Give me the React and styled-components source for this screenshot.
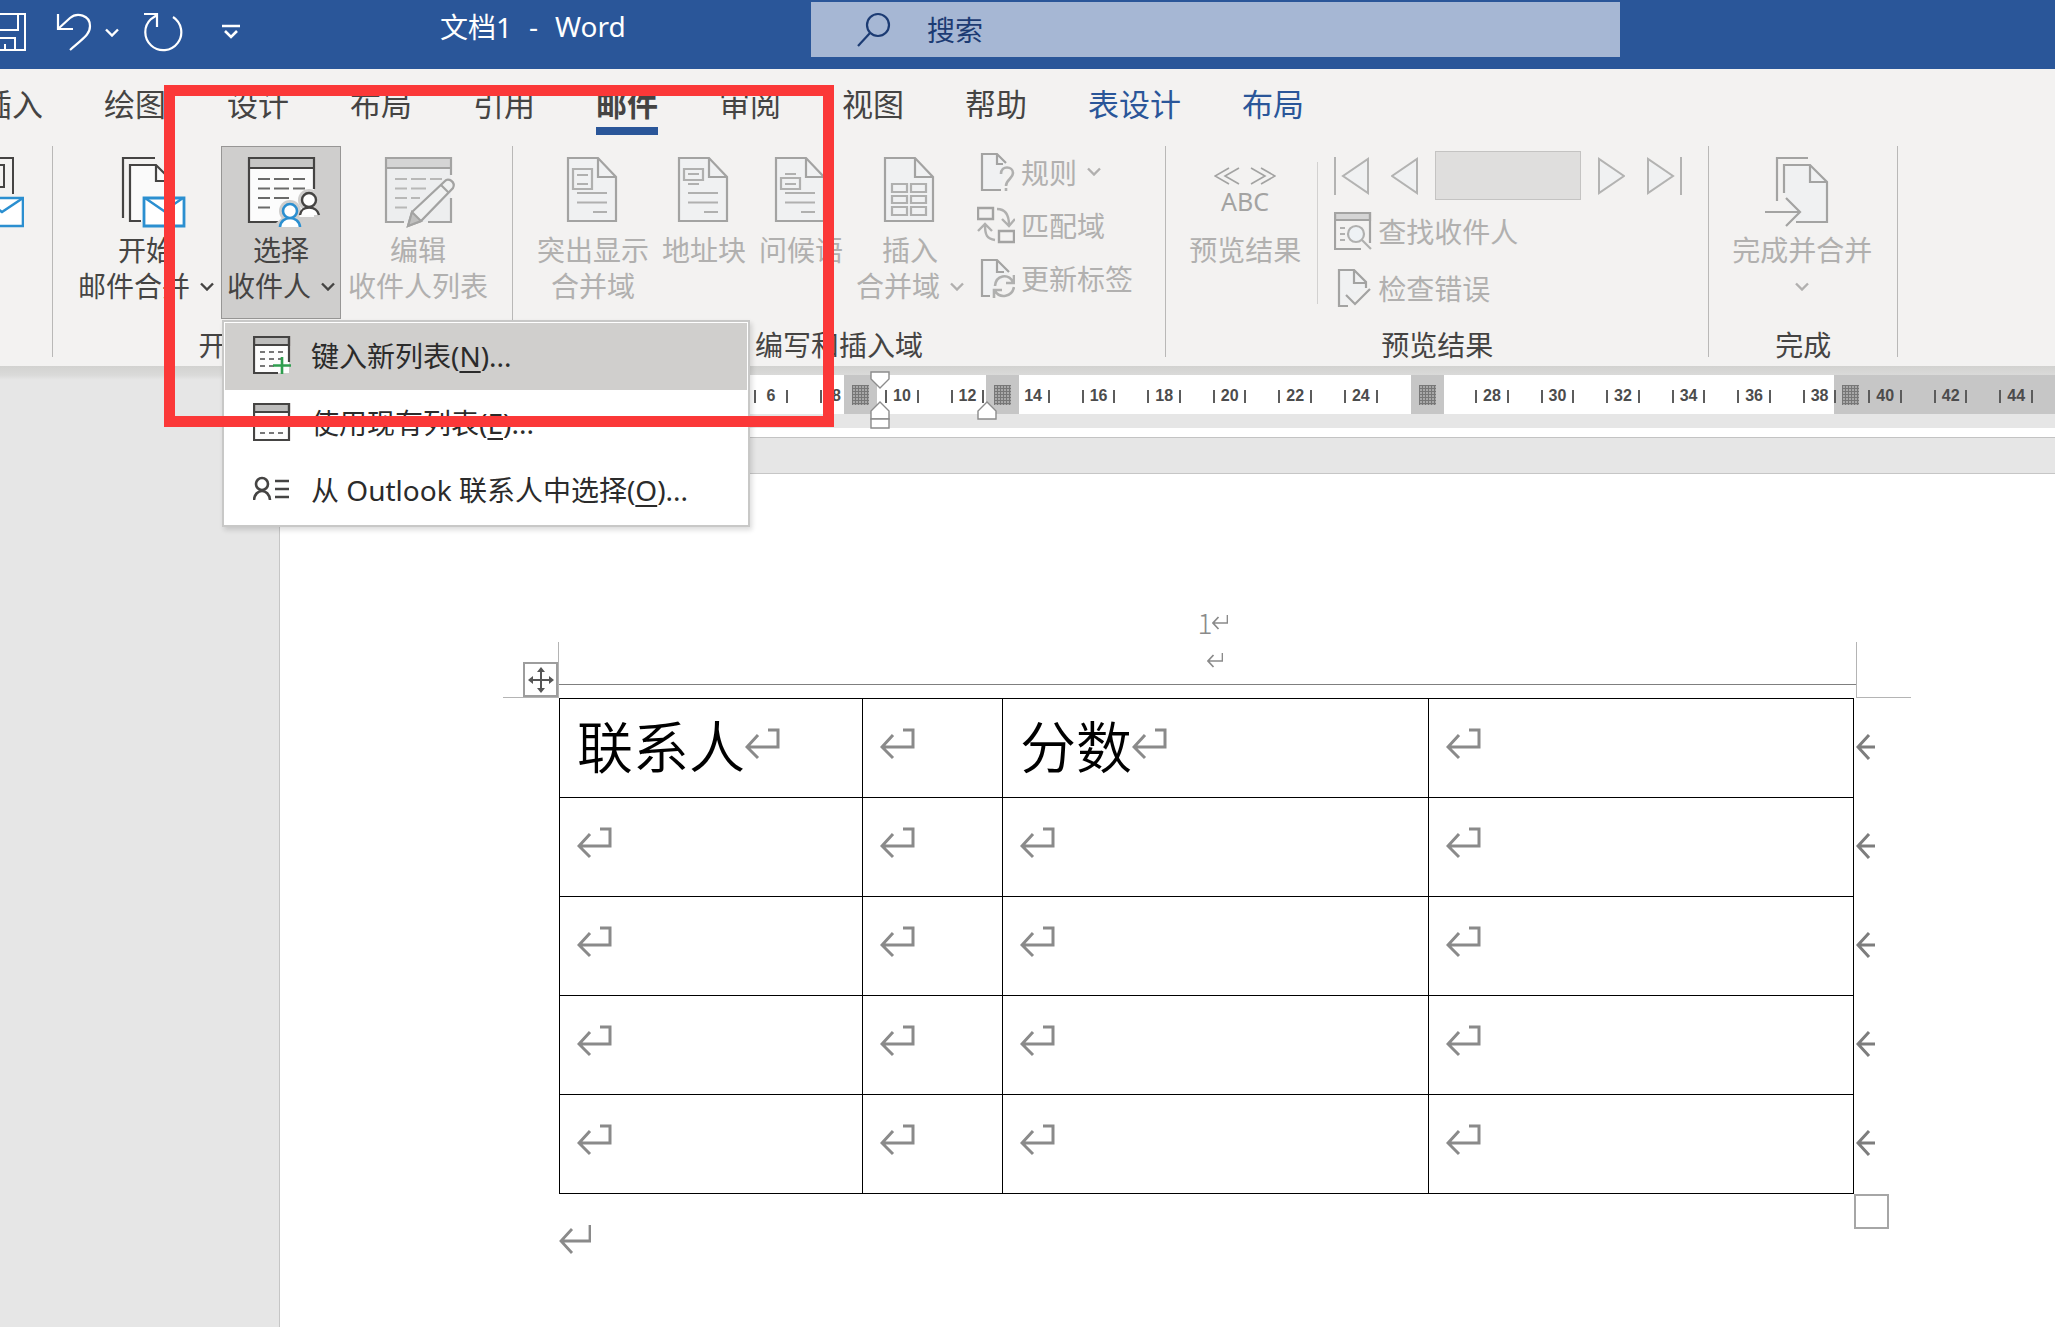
import { useState } from "react";
import styled, { createGlobalStyle } from "styled-components";

const DARK = "#454443";
const MUTED = "#a3a3a2";
const BLUE = "#2b8fd0";

const tabs = [
  { id: "insert", title: "插入" },
  { id: "draw", title: "绘图" },
  { id: "design", title: "设计" },
  { id: "layout", title: "布局" },
  { id: "references", title: "引用" },
  { id: "mailings", title: "邮件" },
  { id: "review", title: "审阅" },
  { id: "view", title: "视图" },
  { id: "help", title: "帮助" },
  { id: "table-design", title: "表设计", contextual: true },
  { id: "table-layout", title: "布局", contextual: true },
];

const rulerMarks = Array.from({ length: 22 }, (_, i) => (i + 1) * 2);
const RULER_UNITS = rulerMarks.length * 2;
// the first cell is centred on 2, so the track begins at unit 1
const rulerLeft = (unit) => `${((unit - 1) / RULER_UNITS) * 100}%`;

const rows = [
  ["联系人", "", "分数", ""],
  ["", "", "", ""],
  ["", "", "", ""],
  ["", "", "", ""],
  ["", "", "", ""],
];

/* ---------- icons ---------- */

const Chevron = () => (
  <svg width="14" height="9" viewBox="0 0 14 9" fill="none" stroke="currentColor" strokeWidth="2.4">
    <path d="M1 1.5L7 7.5L13 1.5" />
  </svg>
);

const SaveIcon = () => (
  <svg width="27" height="40" viewBox="0 0 27 40" fill="none" stroke="#fff" strokeWidth="2">
    <path d="M0 2H25V38H0M18 2V18H0M0 26H15V38M5 38V32" />
  </svg>
);

const UndoIcon = () => (
  <svg width="38" height="40" viewBox="0 0 38 40" fill="none" stroke="#fff" strokeWidth="2.2">
    <path d="M3 2V17H18M3 17L15 6C22 0 35 3 35 14C35 22 30 25 15 38" />
  </svg>
);

const RedoIcon = () => (
  <svg width="40" height="40" viewBox="0 0 40 40" fill="none" stroke="#fff" strokeWidth="2.2">
    <path d="M1 2H14V15M14 3L8 7A18 18 0 1 0 30 5" />
  </svg>
);

const CustomizeIcon = () => (
  <svg width="18" height="16" viewBox="0 0 18 16" fill="none" stroke="#fff" strokeWidth="2.6">
    <path d="M0 2H18M3 7L9 13L15 7" />
  </svg>
);

const SearchIcon = () => (
  <svg width="34" height="36" viewBox="0 0 34 36" fill="none" stroke="#1c3b73" strokeWidth="2.2">
    <circle cx="21" cy="13" r="11" />
    <path d="M13 21L1 34" />
  </svg>
);

const EnvelopeIcon = () => (
  <svg width="24" height="80" viewBox="0 0 24 80" fill="none" strokeWidth="2">
    <path d="M0 5H13V41M0 12H4V34H0" stroke={DARK} />
    <path d="M-20 45H23V73H-20Z" fill="#fff" stroke={BLUE} strokeWidth="2.6" />
    <path d="M23 45L2 59L-18 45" stroke={BLUE} strokeWidth="2.6" />
  </svg>
);

const StartMergeIcon = () => (
  <svg width="80" height="80" viewBox="0 0 80 80" fill="none" strokeWidth="2.2">
    <path d="M49 5H17V65" stroke={DARK} />
    <path d="M35 68H24V12H50L66 28V44" fill="#fafafa" stroke={DARK} />
    <path d="M50 12V28H66" stroke={DARK} />
    <path d="M38 45H78V73H38Z" fill="#fff" stroke={BLUE} strokeWidth="2.8" />
    <path d="M39 45L58 58L77 45" stroke={BLUE} strokeWidth="2.4" />
  </svg>
);

const SelectRecipientsIcon = () => (
  <svg width="80" height="80" viewBox="0 0 80 80" fill="none" strokeWidth="2.2">
    <path d="M8 5H73V69H8Z" fill="#fcfcfc" />
    <path d="M8 5H73V15H8Z" fill="#c6c6c5" />
    <path d="M73 36V5H8V69H37M8 15H73" stroke={DARK} />
    <path d="M17 26H29M33 26H48M52 26H64M17 35.500H29M33 35.500H48M52 35.500H64M17 45H29M33 45H48M17 54.500H29" stroke="#6a6a69" />
    <circle cx="68" cy="47" r="11" fill="#cfcecd" />
    <circle cx="49" cy="58" r="11" fill="#cfcecd" />
    <path d="M35 77V70L42 64H80V77Z" fill="#cfcecd" />
    <path d="M59 62C60 52 76 52 78 62" fill="#fff" stroke={DARK} strokeWidth="2.4" />
    <circle cx="68" cy="47" r="7" fill="#fff" stroke={DARK} strokeWidth="2.4" />
    <path d="M39 74C40 62 58 62 59 74" fill="#fff" stroke={BLUE} strokeWidth="2.6" />
    <circle cx="49" cy="58" r="7" fill="#fff" stroke={BLUE} strokeWidth="2.6" />
  </svg>
);

const EditListIcon = () => (
  <svg width="80" height="80" viewBox="0 0 80 80" fill="none" stroke={MUTED} strokeWidth="2.2">
    <path d="M8 5H73V69H8Z" fill="#edeeef" stroke="none" />
    <path d="M8 5H73V15H8Z" fill="#d5d5d5" stroke="none" />
    <path d="M73 22V5H8V69H26M8 15H73M50 69H73V45" />
    <path d="M17 26H29M33 26H48M52 26H64M17 35.500H29M33 35.500H48M17 45H29M33 45H42M17 54.500H29" stroke="#b8b8b7" />
    <path d="M30 73L34 59L67 28C70 24 78 29 75 35L43 68Z" fill="#f0f1f1" />
    <path d="M30 73L34 59L43 68Z" fill="#c0c0bf" />
    <path d="M63 32L71 40" />
  </svg>
);

const MergePageIcon = ({ kind }) => (
  <svg width="80" height="80" viewBox="0 0 80 80" fill="none" stroke={MUTED} strokeWidth="2.2">
    <path d="M15 5H45L63 24V68H15Z" fill="#f0f1f2" />
    <path d="M45 5V24H63" />
    {kind === "highlight" && <path d="M20 16H39V36H20ZM24 22H35M24 31H35" stroke="#b0b0af" />}
    {kind === "address" && <path d="M20 16H39V27H20ZM24 21H35M24 31H35" stroke="#b0b0af" />}
    {kind === "greeting" && <path d="M24 21H35M20 25H39V36H20ZM24 31H35" stroke="#b0b0af" />}
    {kind === "field" ? (
      <path d="M22 31H37V39H22ZM41 31H56V39H41ZM22 43H37V50H22ZM41 43H56V50H41ZM22 54H37V62H22ZM41 54H56V62H41Z" stroke="#b0b0af" />
    ) : (
      <path d="M24 40H54M24 49.500H54M40 59H54" stroke="#b0b0af" />
    )}
  </svg>
);

const FinishIcon = () => (
  <svg width="80" height="80" viewBox="0 0 80 80" fill="none" stroke={MUTED} strokeWidth="2.2">
    <path d="M15 48V5H46" />
    <path d="M22 40V12H48L65 29V69H34" fill="#f0f1f2" />
    <path d="M48 12V29H65" />
    <path d="M3 59H38M24 45L38 59L24 73" />
  </svg>
);

const RulesIcon = () => (
  <svg width="38" height="40" viewBox="0 0 38 40" fill="none" stroke={MUTED} strokeWidth="2.2">
    <path d="M24 38H5V2H20L29 11" fill="#f0f1f2" />
    <path d="M20 2V12H26" />
    <path d="M24 22C24 13 36 14 36 21C36 27 29 27 29 34M29 36V39" stroke="#b0b0af" strokeWidth="2.6" />
  </svg>
);

const MatchIcon = () => (
  <svg width="38" height="40" viewBox="0 0 38 40" fill="none" stroke={MUTED} strokeWidth="2.4">
    <path d="M1 3H16V14H1ZM22 26H37V37H22Z" />
    <path d="M20 4C28 4 32 10 32 20M25 14L32 21L38 14M18 35C10 34 8 30 8 20M1 26L8 19L15 26" stroke="#b0b0af" />
  </svg>
);

const UpdateIcon = () => (
  <svg width="38" height="40" viewBox="0 0 38 40" fill="none" stroke={MUTED} strokeWidth="2.2">
    <path d="M13 38H5V2H20L32 14" fill="#f0f1f2" />
    <path d="M20 2V14H27" />
    <path d="M18 28C19 17 31 15 36 24M37 17V25H29M37 29C35 39 23 41 18 33M17 40V32H25" stroke="#b0b0af" strokeWidth="2.6" />
  </svg>
);

const FindIcon = () => (
  <svg width="38" height="38" viewBox="0 0 38 38" fill="none" stroke={MUTED} strokeWidth="2.2">
    <path d="M1 1H36V8H1Z" fill="#d5d5d5" />
    <path d="M27 37H1V1H36V31" />
    <path d="M6 16H11M6 22H11M6 28H11" stroke="#b0b0af" />
    <circle cx="22" cy="22" r="8" fill="#eef2f5" stroke="#b0b0af" />
    <path d="M28 28L37 37" stroke="#b0b0af" />
  </svg>
);

const CheckErrorsIcon = () => (
  <svg width="38" height="38" viewBox="0 0 38 38" fill="none" stroke={MUTED} strokeWidth="2.2">
    <path d="M14 37H5V1H20L32 13V19" fill="#f0f1f2" />
    <path d="M20 1V14H32" />
    <path d="M12 26L21 35L36 20" />
  </svg>
);

const NavIcon = ({ flip, end }) => (
  <svg width={end ? 36 : 28} height="38" viewBox={end ? "0 0 36 38" : "8 0 28 38"} fill="none" stroke="#b3b3b2" strokeWidth="2">
    <g transform={flip ? (end ? "translate(36 0) scale(-1 1)" : "translate(44 0) scale(-1 1)") : undefined}>
      {end && <path d="M1 0V38" />}
      <path d="M34 2V36L9 19Z" fill="#f0f1f2" />
    </g>
  </svg>
);

const AngleQuotes = () => (
  <svg width="62" height="18" viewBox="0 0 62 18" fill="none" stroke={MUTED} strokeWidth="1.6">
    <path d="M15 1L1 9L15 17M25 1L11 9L25 17M37 1L51 9L37 17M47 1L61 9L47 17" />
  </svg>
);

const ListIcon = ({ add }) => (
  <svg width="38" height="38" viewBox="0 0 38 38" fill="none" stroke={DARK} strokeWidth="2.2">
    <path d="M1 1H36V37H1Z" fill="#fdfdfd" stroke="none" />
    <path d="M1 1H36V9H1Z" fill="#bdbdbc" />
    <path d={add ? "M36 26V1H1V37H25" : "M36 1V37H1V1Z"} />
    <path d={add ? "M7 16H12M16 16H21M25 16H30M7 23H12M16 23H21M25 23H30M7 30H12M16 30H21" : "M7 16H12M16 16H21M25 16H30M7 23H12M16 23H21M25 23H30M7 30H12M16 30H21M25 30H30"} stroke="#777" />
    {add && <path d="M29 21V38M20 29.500H38" stroke="#2f9e4f" strokeWidth="2.6" />}
  </svg>
);

const ContactIcon = () => (
  <svg width="38" height="38" viewBox="0 0 38 38" fill="none" stroke={DARK} strokeWidth="2.6">
    <circle cx="9" cy="14" r="6" />
    <path d="M1 30C2 18 16 18 17 30M22 11H36M22 19H36M22 27H36" />
  </svg>
);

const CellMark = () => (
  <svg width="35" height="32" viewBox="0 0 35 32" fill="none" stroke="#8a8a8a" strokeWidth="3">
    <path d="M23 2H33V19H2M13 7L2 19L13 30" />
  </svg>
);

const ParagraphMark = ({ size = 32 }) => (
  <svg width={size} height={size} viewBox="0 0 32 32" fill="none" stroke="#8a8a8a" strokeWidth={size < 20 ? 3.4 : 2.8}>
    <path d="M31 2V18H2M13 6L2 18L13 30" />
  </svg>
);

const RowEndMark = () => (
  <svg width="20" height="26" viewBox="0 0 20 26" fill="none" stroke="#7d7d7d" strokeWidth="3">
    <path d="M19 13H2M13 1L2 13L13 25" />
  </svg>
);

const MoveIcon = () => (
  <svg width="28" height="28" viewBox="0 0 28 28" stroke="#555" fill="#555" strokeWidth="2">
    <path d="M14 3V25M3 14H25" />
    <path d="M14 1L18 6H10ZM14 27L18 22H10ZM1 14L6 10V18ZM27 14L22 10V18Z" stroke="none" />
  </svg>
);

const FirstLineIndent = () => (
  <svg width="20" height="18" viewBox="0 0 20 18" fill="#fff" stroke="#8c8c8c" strokeWidth="1.4">
    <path d="M1 1H19V8L10 17L1 8Z" />
  </svg>
);

const HangingIndent = ({ base }) => (
  <svg width="20" height={base ? 28 : 19} viewBox={base ? "0 0 20 28" : "0 0 20 19"} fill="#fff" stroke="#8c8c8c" strokeWidth="1.4">
    <path d="M1 18V10L10 1L19 10V18Z" />
    {base && <path d="M1 18H19V27H1Z" />}
  </svg>
);

/* ---------- ribbon pieces ---------- */

const BigButton = ({ icon, lines, arrow, arrowBelow, ...rest }) => (
  <BigButtonBox {...rest}>
    <IconSlot>{icon}</IconSlot>
    {lines.map((line, i) => (
      <ButtonLine key={line}>
        {line}
        {arrow && i === lines.length - 1 && <Chevron />}
      </ButtonLine>
    ))}
    {arrowBelow && (
      <ButtonLine>
        <Chevron />
      </ButtonLine>
    )}
  </BigButtonBox>
);

const RecipientsMenu = () => (
  <Menu role="menu">
    <MenuItem role="menuitem" $active>
      <ListIcon add />
      <span>
        键入新列表(<u>N</u>)...
      </span>
    </MenuItem>
    <MenuItem role="menuitem">
      <ListIcon />
      <span>
        使用现有列表(<u>E</u>)...
      </span>
    </MenuItem>
    <MenuItem role="menuitem">
      <ContactIcon />
      <span>
        从 Outlook 联系人中选择(<u>O</u>)...
      </span>
    </MenuItem>
  </Menu>
);

const Ruler = () => (
  <RulerBar>
    <RulerTrack>
      <RulerZone style={{ left: rulerLeft(8.23) }} />
      <RulerZone style={{ left: rulerLeft(12.56) }} />
      <RulerZone style={{ left: rulerLeft(25.53) }} />
      <RulerZone $toEdge style={{ left: rulerLeft(38.44) }} />
      {rulerMarks.map((n) => (
        <RulerCell key={n}>
          {n !== 26 && (
            <>
              <Tick $hidden={n === 14} />
              <span>{n}</span>
              <Tick $hidden={n === 8} />
            </>
          )}
        </RulerCell>
      ))}
      <IndentMarker $top="-4px" style={{ left: rulerLeft(9.03) }}>
        <FirstLineIndent />
      </IndentMarker>
      <IndentMarker $top="26px" style={{ left: rulerLeft(9.03) }}>
        <HangingIndent base />
      </IndentMarker>
      <IndentMarker $top="26px" style={{ left: rulerLeft(12.3) }}>
        <HangingIndent />
      </IndentMarker>
    </RulerTrack>
  </RulerBar>
);

const App = () => {
  const [activeTab, setActiveTab] = useState("mailings");
  const [menuOpen, setMenuOpen] = useState(true);

  return (
    <Wrapper>
      <GlobalStyle />
      <TitleBar>
        <TitleLeft>
          <QuickAccess>
            <IconButton aria-label="保存">
              <SaveIcon />
            </IconButton>
            <IconButton aria-label="撤消">
              <UndoIcon />
            </IconButton>
            <IconButton aria-label="撤消选项">
              <Chevron />
            </IconButton>
            <IconButton aria-label="重复">
              <RedoIcon />
            </IconButton>
            <IconButton aria-label="自定义快速访问工具栏">
              <CustomizeIcon />
            </IconButton>
          </QuickAccess>
          <DocTitle>
            <span>文档1</span>
            <span>-</span>
            <span>Word</span>
          </DocTitle>
        </TitleLeft>
        <SearchBox>
          <SearchIcon />
          <SearchInput type="search" aria-label="搜索" placeholder="搜索" />
        </SearchBox>
      </TitleBar>

      <TabStrip role="tablist">
        {tabs.map((tab) => (
          <Tab
            key={tab.id}
            role="tab"
            aria-selected={tab.id === activeTab}
            $active={tab.id === activeTab}
            $contextual={tab.contextual}
            onClick={() => setActiveTab(tab.id)}
          >
            {tab.title}
          </Tab>
        ))}
      </TabStrip>

      <Ribbon>
        <Group>
          <GroupBody $left="0" $right="28px">
            <EnvelopeButton aria-label="标签">
              <EnvelopeIcon />
            </EnvelopeButton>
          </GroupBody>
        </Group>

        <Group>
          <GroupBody $left="19px" $right="18px">
            <BigButton icon={<StartMergeIcon />} lines={["开始", "邮件合并"]} arrow />
            <MenuAnchor>
              <BigButton
                icon={<SelectRecipientsIcon />}
                lines={["选择", "收件人"]}
                arrow
                $pressed={menuOpen}
                aria-expanded={menuOpen}
                onClick={() => setMenuOpen(!menuOpen)}
              />
              {menuOpen && <RecipientsMenu />}
            </MenuAnchor>
            <BigButton icon={<EditListIcon />} lines={["编辑", "收件人列表"]} disabled />
          </GroupBody>
          <GroupLabel>开始邮件合并</GroupLabel>
        </Group>

        <Group>
          <GroupBody $left="18px" $right="32px">
            <BigButton icon={<MergePageIcon kind="highlight" />} lines={["突出显示", "合并域"]} disabled />
            <BigButton icon={<MergePageIcon kind="address" />} lines={["地址块"]} disabled />
            <BigButton icon={<MergePageIcon kind="greeting" />} lines={["问候语"]} disabled />
            <BigButton icon={<MergePageIcon kind="field" />} lines={["插入", "合并域"]} arrow disabled />
            <SmallColumn>
              <SmallButton disabled>
                <RulesIcon />
                规则
                <Chevron />
              </SmallButton>
              <SmallButton disabled>
                <MatchIcon />
                匹配域
              </SmallButton>
              <SmallButton disabled>
                <UpdateIcon />
                更新标签
              </SmallButton>
            </SmallColumn>
          </GroupBody>
          <GroupLabel>编写和插入域</GroupLabel>
        </Group>

        <Group>
          <GroupBody $left="17px" $right="26px">
            <BigButton
              icon={
                <PreviewGlyph>
                  <AngleQuotes />
                  ABC
                </PreviewGlyph>
              }
              lines={["预览结果"]}
              disabled
            />
            <InnerDivider />
            <RecordColumn>
              <RecordNav>
                <IconButton aria-label="首记录" disabled>
                  <NavIcon end />
                </IconButton>
                <IconButton aria-label="上一记录" disabled>
                  <NavIcon />
                </IconButton>
                <RecordInput aria-label="记录" disabled />
                <IconButton aria-label="下一记录" disabled>
                  <NavIcon flip />
                </IconButton>
                <IconButton aria-label="尾记录" disabled>
                  <NavIcon flip end />
                </IconButton>
              </RecordNav>
              <SmallButton disabled>
                <FindIcon />
                查找收件人
              </SmallButton>
              <SmallButton disabled>
                <CheckErrorsIcon />
                检查错误
              </SmallButton>
            </RecordColumn>
          </GroupBody>
          <GroupLabel>预览结果</GroupLabel>
        </Group>

        <Group>
          <GroupBody $left="17px" $right="19px">
            <BigButton icon={<FinishIcon />} lines={["完成并合并"]} arrowBelow disabled />
          </GroupBody>
          <GroupLabel>完成</GroupLabel>
        </Group>
      </Ribbon>

      <Workspace>
        <Ruler />
        <PreviousPage />
        <Page>
          <PageNumber>
            1<ParagraphMark size={16} />
          </PageNumber>
          <HeaderRow>
            <CornerLeft>
              <MoveHandle aria-label="移动表格">
                <MoveIcon />
              </MoveHandle>
            </CornerLeft>
            <HeaderLine>
              <ParagraphMark size={16} />
            </HeaderLine>
            <CornerRight />
          </HeaderRow>
          <TableArea>
            <DocTable>
              <colgroup>
                <col width="303" />
                <col width="140" />
                <col width="426" />
                <col width="425" />
                <col width="22" />
              </colgroup>
              <tbody>
                {rows.map((row, r) => (
                  <tr key={r}>
                    {row.map((text, c) => (
                      <Cell key={c}>
                        <CellContent>
                          {text}
                          <CellMark />
                        </CellContent>
                      </Cell>
                    ))}
                    <EndCell>
                      <RowEndMark />
                    </EndCell>
                  </tr>
                ))}
              </tbody>
            </DocTable>
          </TableArea>
          <AfterTable>
            <ParagraphMark />
            <ResizeHandle aria-label="调整表格大小" />
          </AfterTable>
        </Page>
      </Workspace>
      <Highlight />
    </Wrapper>
  );
};

export default App;

/* ---------- styles ---------- */

const GlobalStyle = createGlobalStyle`
  * {
    box-sizing: border-box;
  }

  body {
    margin: 0;
    background: #e6e6e6;
    font-family: "Noto Sans", "Noto Sans CJK SC", sans-serif;
  }

  button, input {
    font: inherit;
    color: inherit;
  }

  svg {
    display: block;
    flex: none;
  }
`;

const Wrapper = styled.div`
  position: relative;
  display: flex;
  flex-direction: column;
  min-height: 100vh;
  overflow: hidden;
  color: #454443;
  font-size: 28px;
`;

const TitleBar = styled.header`
  display: flex;
  height: 69px;
  padding: 2px 435px 12px 0;
  background: #2a5699;
  color: #fff;
`;

const TitleLeft = styled.div`
  display: flex;
  width: 811px;
  flex: none;
`;

const QuickAccess = styled.div`
  display: flex;
  align-items: center;
  width: 440px;
  padding-top: 5px;

  & > :nth-child(2) {
    margin-left: 28px;
  }
  & > :nth-child(3) {
    margin-left: 12px;
  }
  & > :nth-child(4) {
    margin-left: 24px;
  }
  & > :nth-child(5) {
    margin-left: 39px;
  }
`;

const IconButton = styled.button`
  display: grid;
  place-items: center;
  flex: none;
  border: 0;
  padding: 0;
  background: none;
`;

const DocTitle = styled.div`
  display: flex;
  align-items: center;
  gap: 17px;
  height: 48px;
`;

const SearchBox = styled.label`
  display: flex;
  align-items: center;
  flex: 1;
  gap: 36px;
  padding-left: 46px;
  background: #a6b7d4;
`;

const SearchInput = styled.input`
  flex: 1;
  min-width: 0;
  border: 0;
  padding: 0;
  outline: none;
  background: none;
  color: #1c3b73;

  &::placeholder {
    color: #1c3b73;
    opacity: 1;
  }
`;

const TabStrip = styled.nav`
  display: flex;
  gap: 61px;
  height: 77px;
  margin-left: -19px;
  background: #f3f2f1;
`;

const Tab = styled.button`
  flex: none;
  height: 66px;
  border: 0;
  border-bottom: 8px solid ${(p) => (p.$active ? "#2a5699" : "transparent")};
  padding: 12px 0 0;
  background: none;
  color: ${(p) => (p.$contextual ? "#2a5699" : "#454443")};
  font-size: 31px;
  font-weight: ${(p) => (p.$active ? 700 : 400)};
  line-height: 44px;
  white-space: nowrap;
`;

const Ribbon = styled.div`
  display: flex;
  height: 220px;
  background: #f3f2f1;
`;

const Group = styled.section`
  flex: none;
  height: 211px;
  border-right: 1px solid #b9b8b7;
`;

const GroupBody = styled.div`
  display: flex;
  gap: 1px;
  height: 173px;
  padding: 0 ${(p) => p.$right} 0 ${(p) => p.$left};
`;

const GroupLabel = styled.div`
  margin-top: 14px;
  line-height: 24px;
  text-align: center;
  white-space: nowrap;
`;

const BigButtonBox = styled.button`
  display: flex;
  flex-direction: column;
  align-items: center;
  flex: none;
  height: 173px;
  border: 1px solid ${(p) => (p.$pressed ? "#979695" : "transparent")};
  padding: 6px 5px 0;
  background: ${(p) => (p.$pressed ? "#cfcecd" : "none")};
  white-space: nowrap;

  &:disabled {
    color: #b1b0af;
  }
`;

const EnvelopeButton = styled(IconButton)`
  height: 87px;
  padding-top: 7px;
`;

const IconSlot = styled.span`
  display: flex;
  justify-content: center;
  height: 79px;
`;

const ButtonLine = styled.span`
  display: flex;
  align-items: center;
  gap: 10px;
  height: 36px;
  line-height: 36px;
`;

const MenuAnchor = styled.div`
  position: relative;
`;

const Menu = styled.div`
  position: absolute;
  z-index: 2;
  top: calc(100% + 1px);
  left: 1px;
  width: 528px;
  border: 2px solid #c8c8c7;
  padding: 1px;
  background: #fff;
  box-shadow: 2px 3px 5px rgba(0, 0, 0, 0.14);
`;

const MenuItem = styled.button`
  display: flex;
  align-items: center;
  gap: 20px;
  width: 100%;
  height: 67px;
  border: 0;
  padding: 0 0 3px 28px;
  background: ${(p) => (p.$active ? "#d0cfcd" : "#fff")};
  color: #2b2b2b;
  white-space: nowrap;

  u {
    text-underline-offset: 4px;
    text-decoration-thickness: 2px;
  }
`;

const SmallColumn = styled.div`
  margin-left: 6px;
`;

const SmallButton = styled.button`
  display: flex;
  align-items: center;
  gap: 6px;
  height: 53px;
  border: 0;
  padding: 0 0 2px;
  background: none;
  white-space: nowrap;

  &:disabled {
    color: #b1b0af;
  }

  svg:last-child:not(:first-child) {
    margin-left: 4px;
  }
`;

const PreviewGlyph = styled.span`
  display: flex;
  flex-direction: column;
  align-items: center;
  padding-top: 14px;
  color: #a3a3a2;
  font-size: 25px;
  line-height: 32px;
`;

const InnerDivider = styled.div`
  width: 1px;
  height: 142px;
  margin: 16px 15px 0 9px;
  background: #d2d1d0;
`;

const RecordColumn = styled.div`
  padding-top: 5px;

  ${SmallButton} {
    height: 57px;
  }
`;

const RecordNav = styled.div`
  display: flex;
  align-items: center;
  gap: 16px;
  height: 49px;
  margin-bottom: 3px;

  & > :first-child {
    margin-right: 5px;
  }
  & > :last-child {
    margin-left: 5px;
  }
`;

const RecordInput = styled.input`
  width: 146px;
  height: 49px;
  border: 1px solid #c4c3c2;
  background: #dfdedd;
`;

const Workspace = styled.main`
  display: flex;
  flex-direction: column;
  flex: 1;
  padding-left: 279px;
  background: linear-gradient(#d2d2d0, #dadad9 9px, #e6e6e6 14px);
`;

const RulerBar = styled.div`
  height: 39px;
  margin-top: 9px;
  padding: 0 6px 0 328px;
  background: #fff;
`;

const RulerTrack = styled.div`
  position: relative;
  display: flex;
  height: 39px;
`;

const RulerCell = styled.div`
  position: relative;
  display: flex;
  align-items: center;
  justify-content: space-between;
  flex: 1;
  padding: 3px 16px 0;
  color: #4c4c4c;
  font-family: "Liberation Sans", Arial, sans-serif;
  font-size: 16px;
  font-weight: 700;
`;

const Tick = styled.i`
  width: 2px;
  height: 13px;
  background: #5c5c5c;
  visibility: ${(p) => (p.$hidden ? "hidden" : "visible")};
`;

const RulerZone = styled.div`
  position: absolute;
  top: 0;
  right: ${(p) => (p.$toEdge ? "-6px" : "auto")};
  width: ${(p) => (p.$toEdge ? "auto" : "33px")};
  height: 39px;
  background: #c6c6c6;

  &::before {
    content: "";
    display: block;
    width: 17px;
    height: 20px;
    margin: 10px 8px;
    background:
      repeating-linear-gradient(90deg, #777 0 1px, transparent 1px 3px),
      repeating-linear-gradient(#777 0 1px, #a8a8a8 1px 3px);
  }
`;

const IndentMarker = styled.div`
  position: absolute;
  top: ${(p) => p.$top};
`;

const PreviousPage = styled.div`
  height: 10px;
  margin: 14px 0 35px;
  border-bottom: 1px solid #c3c3c3;
  background: #fff;
`;

const Page = styled.article`
  flex: 1;
  border-top: 1px solid #c6c6c6;
  border-left: 1px solid #c6c6c6;
  padding: 130px 144px 0 223px;
  background: #fff;
`;

const PageNumber = styled.div`
  display: flex;
  align-items: center;
  justify-content: center;
  height: 36px;
  margin: 0 0 2px 12px;
  color: #8a8a8a;
  font-family: "Noto Sans CJK SC", sans-serif;
  font-weight: 300;
`;

const HeaderRow = styled.div`
  display: flex;
  height: 56px;
`;

const CornerLeft = styled.div`
  display: flex;
  align-items: flex-end;
  justify-content: flex-end;
  width: 56px;
  border-right: 1px solid #b4b4b4;
  border-bottom: 1px solid #b4b4b4;
`;

const CornerRight = styled.div`
  width: 55px;
  border-left: 1px solid #b4b4b4;
  border-bottom: 1px solid #b4b4b4;
`;

const MoveHandle = styled.button`
  display: grid;
  place-items: center;
  width: 35px;
  height: 35px;
  border: 2px solid #9d9d9d;
  padding: 0;
  background: #fff;
`;

const HeaderLine = styled.div`
  display: flex;
  justify-content: center;
  flex: 1;
  height: 43px;
  border-bottom: 1px solid #7f7f7f;
  padding: 10px 0 0 14px;
`;

const TableArea = styled.div`
  padding: 0 35px 0 56px;
`;

const DocTable = styled.table`
  width: 100%;
  border-collapse: collapse;
  table-layout: fixed;
`;

const Cell = styled.td`
  height: 99px;
  border: 1px solid #000;
  padding: 0 0 0 17px;
`;

const CellContent = styled.div`
  display: flex;
  align-items: center;
  padding-bottom: 8px;
  color: #000;
  font-family: "Noto Sans CJK SC", sans-serif;
  font-size: 56px;
  font-weight: 350;
  line-height: 80px;
  white-space: nowrap;
`;

const EndCell = styled.td`
  padding: 0 0 2px 2px;
`;

const AfterTable = styled.div`
  display: flex;
  align-items: flex-end;
  justify-content: space-between;
  height: 61px;
  padding: 0 22px 0 56px;
`;

const ResizeHandle = styled.button`
  align-self: flex-start;
  width: 35px;
  height: 35px;
  border: 2px solid #a6a6a6;
  padding: 0;
  background: #fff;
`;

const Highlight = styled.div`
  position: absolute;
  z-index: 3;
  top: 85px;
  left: 164px;
  width: 670px;
  height: 342px;
  border: 11px solid #fb3838;
  pointer-events: none;
`;
